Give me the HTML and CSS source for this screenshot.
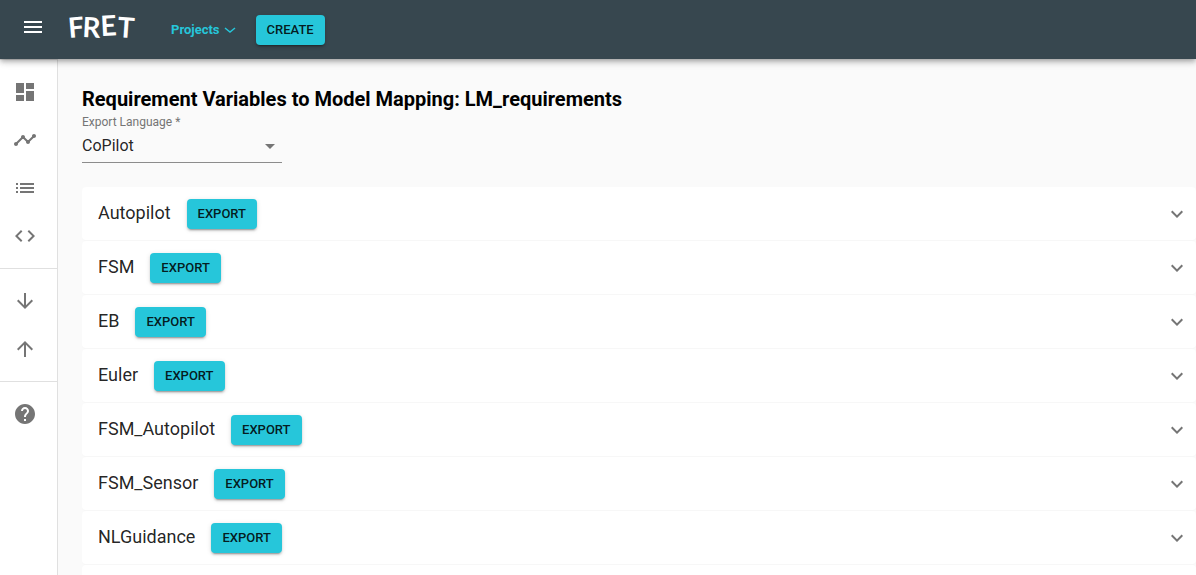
FILE: index.html
```html
<!DOCTYPE html>
<html lang="en">
<head>
<meta charset="utf-8">
<meta name="viewport" content="width=device-width, initial-scale=1">
<title>FRET</title>
<link rel="stylesheet" href="styles.css">
</head>
<body>
<header class="topbar">
  <button class="icon-button menu-button" aria-label="Open menu"><svg class="icon" viewBox="0 0 24 24"><path d="M3 18h18v-2H3v2zm0-5h18v-2H3v2zm0-7v2h18V6H3z"/></svg></button>
  <svg class="logo" viewBox="0 0 72 48" role="img" aria-label="FRET"><text x="2 15 34 50" y="34 33 32 33" rotate="-5 3 -3 4">FRET</text></svg>
  <button class="projects">Projects <svg class="small-chevron" viewBox="0 0 12 12"><path d="M1 4l5 4 5-4"/></svg></button>
  <button class="button">CREATE</button>
</header>
<div class="shell">
  <nav class="sidebar" aria-label="Main">
    <div class="nav-group">
      <button class="icon-button" aria-label="Dashboard"><svg class="icon" viewBox="0 0 24 24"><path d="M3 13h8V3H3v10zm0 8h8v-6H3v6zm10 0h8V11h-8v10zm0-18v6h8V3h-8z"/></svg></button>
      <button class="icon-button" aria-label="Analysis"><svg class="icon" viewBox="0 0 24 24"><path d="M23 8c0 1.1-.9 2-2 2-.18 0-.35-.02-.51-.07l-3.56 3.55c.05.16.07.34.07.52 0 1.1-.9 2-2 2s-2-.9-2-2c0-.18.02-.36.07-.52l-2.55-2.55c-.16.05-.34.07-.52.07s-.36-.02-.52-.07l-4.55 4.56c.05.16.07.33.07.51 0 1.1-.9 2-2 2s-2-.9-2-2 .9-2 2-2c.18 0 .35.02.51.07l4.56-4.55C8.02 9.36 8 9.18 8 9c0-1.1.9-2 2-2s2 .9 2 2c0 .18-.02.36-.07.52l2.55 2.55c.16-.05.34-.07.52-.07s.36.02.52.07l3.55-3.56C19.02 8.35 19 8.18 19 8c0-1.1.9-2 2-2s2 .9 2 2z"/></svg></button>
      <button class="icon-button" aria-label="Requirements"><svg class="icon" viewBox="0 0 24 24"><path d="M3 13h2v-2H3v2zm0 4h2v-2H3v2zm0-8h2V7H3v2zm4 4h14v-2H7v2zm0 4h14v-2H7v2zM7 7v2h14V7H7z"/></svg></button>
      <button class="icon-button" aria-label="Variable mapping"><svg class="icon" viewBox="0 0 24 24"><path d="M9.4 16.6L4.8 12l4.6-4.6L8 6l-6 6 6 6 1.4-1.4zm5.2 0l4.6-4.6-4.6-4.6L16 6l6 6-6 6-1.4-1.4z"/></svg></button>
    </div>
    <div class="nav-group">
      <button class="icon-button" aria-label="Import"><svg class="icon" viewBox="0 0 24 24"><path d="M20 12l-1.41-1.41L13 16.17V4h-2v12.17l-5.58-5.59L4 12l8 8 8-8z"/></svg></button>
      <button class="icon-button" aria-label="Export"><svg class="icon" viewBox="0 0 24 24"><path d="M4 12l1.41 1.41L11 7.83V20h2V7.83l5.58 5.59L20 12l-8-8-8 8z"/></svg></button>
    </div>
    <div class="nav-group">
      <button class="icon-button" aria-label="Help"><svg class="icon" viewBox="0 0 24 24"><path d="M12 2C6.48 2 2 6.48 2 12s4.480 10 10 10 10-4.480 10-10S17.520 2 12 2zm1 17h-2v-2h2v2zm2.070-7.750l-.9.920C13.450 12.900 13 13.500 13 15h-2v-.5c0-1.100.450-2.100 1.170-2.830l1.240-1.260c.370-.360.590-.860.590-1.410 0-1.100-.9-2-2-2s-2 .9-2 2H8c0-2.210 1.790-4 4-4s4 1.790 4 4c0 .880-.360 1.680-.930 2.250z"/></svg></button>
    </div>
  </nav>
  <main class="content">
    <h1 class="title">Requirement Variables to Model Mapping: LM_requirements</h1>
    <div class="field">
      <label class="field-label" for="language">Export Language *</label>
      <div class="select-wrap">
        <select class="select" id="language" required><option>CoPilot</option><option>CoCoSpec</option></select>
        <svg class="icon select-arrow" viewBox="0 0 24 24"><path d="M7 10l5 5 5-5z"/></svg>
      </div>
    </div>
    <div class="components">
      <section class="row"><h2 class="name">Autopilot</h2><button class="button">EXPORT</button><button class="expand" aria-label="Expand Autopilot"><svg class="icon" viewBox="0 0 24 24"><path d="M16.590 8.590L12 13.170 7.410 8.590 6 10l6 6 6-6z"/></svg></button></section>
      <section class="row"><h2 class="name">FSM</h2><button class="button">EXPORT</button><button class="expand" aria-label="Expand FSM"><svg class="icon" viewBox="0 0 24 24"><path d="M16.590 8.590L12 13.170 7.410 8.590 6 10l6 6 6-6z"/></svg></button></section>
      <section class="row"><h2 class="name">EB</h2><button class="button">EXPORT</button><button class="expand" aria-label="Expand EB"><svg class="icon" viewBox="0 0 24 24"><path d="M16.590 8.590L12 13.170 7.410 8.590 6 10l6 6 6-6z"/></svg></button></section>
      <section class="row"><h2 class="name">Euler</h2><button class="button">EXPORT</button><button class="expand" aria-label="Expand Euler"><svg class="icon" viewBox="0 0 24 24"><path d="M16.590 8.590L12 13.170 7.410 8.590 6 10l6 6 6-6z"/></svg></button></section>
      <section class="row"><h2 class="name">FSM_Autopilot</h2><button class="button">EXPORT</button><button class="expand" aria-label="Expand FSM_Autopilot"><svg class="icon" viewBox="0 0 24 24"><path d="M16.590 8.590L12 13.170 7.410 8.590 6 10l6 6 6-6z"/></svg></button></section>
      <section class="row"><h2 class="name">FSM_Sensor</h2><button class="button">EXPORT</button><button class="expand" aria-label="Expand FSM_Sensor"><svg class="icon" viewBox="0 0 24 24"><path d="M16.590 8.590L12 13.170 7.410 8.590 6 10l6 6 6-6z"/></svg></button></section>
      <section class="row"><h2 class="name">NLGuidance</h2><button class="button">EXPORT</button><button class="expand" aria-label="Expand NLGuidance"><svg class="icon" viewBox="0 0 24 24"><path d="M16.590 8.590L12 13.170 7.410 8.590 6 10l6 6 6-6z"/></svg></button></section>
      <section class="row row-end"></section>
    </div>
  </main>
</div>
</body>
</html>
```
FILE: styles.css
```css
* { box-sizing: border-box; }

body {
  margin: 0;
  min-height: 100vh;
  display: flex;
  flex-direction: column;
  background: #fafafa;
  color: rgba(0, 0, 0, 0.87);
  font-family: Roboto, "Liberation Sans", sans-serif;
}

button {
  border: 0;
  padding: 0;
  background: none;
  color: inherit;
  font-family: inherit;
  cursor: pointer;
}

.icon {
  display: block;
  width: 24px;
  height: 24px;
  fill: currentColor;
}

.topbar {
  position: relative;
  z-index: 1;
  display: flex;
  align-items: center;
  height: 59px;
  padding: 0 9px;
  background: #37474f;
  color: #fff;
  box-shadow: 0 2px 4px -1px rgba(0, 0, 0, 0.2), 0 4px 5px rgba(0, 0, 0, 0.14), 0 1px 10px rgba(0, 0, 0, 0.12);
}

.icon-button {
  display: grid;
  place-items: center;
  width: 48px;
  height: 48px;
}

.menu-button { padding-bottom: 6px; }

.logo {
  width: 72px;
  height: 48px;
  margin: 0 32px 4px 10px;
  fill: #fff;
  font: 700 28px Lato, sans-serif;
}

.projects {
  display: flex;
  align-items: center;
  gap: 4px;
  margin-right: 20px;
  color: #26c6da;
  font-size: 13px;
  font-weight: 700;
}

.small-chevron {
  width: 12px;
  height: 12px;
  fill: none;
  stroke: currentColor;
  stroke-width: 1.5;
}

.button {
  height: 30px;
  padding: 0 11px;
  border-radius: 4px;
  background: #26c6da;
  color: rgba(0, 0, 0, 0.87);
  font-size: 13px;
  font-weight: 500;
  box-shadow: 0 3px 1px -2px rgba(0, 0, 0, 0.2), 0 2px 2px rgba(0, 0, 0, 0.14), 0 1px 5px rgba(0, 0, 0, 0.12);
}

.shell {
  display: flex;
  flex: 1;
}

.sidebar {
  flex: none;
  width: 58px;
  border-right: 1px solid #e0e0e0;
  background: #fff;
  color: #757575;
}

.nav-group {
  padding: 8px 1px;
  border-top: 1px solid #e0e0e0;
}

.content {
  flex: 1;
  min-width: 0;
  padding: 24px 0 0 24px;
}

.title {
  margin: 0;
  color: #000;
  font-size: 20px;
  font-weight: 700;
  line-height: 32px;
}

.field {
  width: 200px;
  margin-bottom: 24px;
}

.field-label {
  display: block;
  color: #757575;
  font-size: 12px;
  line-height: 14px;
}

.select-wrap {
  display: grid;
  align-items: center;
  border-bottom: 1px solid #8c8c8c;
}

.select {
  grid-area: 1 / 1;
  width: 100%;
  height: 33px;
  padding: 0;
  border: 0;
  appearance: none;
  background: none;
  color: inherit;
  font: 400 16px Roboto, sans-serif;
}

.select-arrow {
  grid-area: 1 / 1;
  justify-self: end;
  color: #757575;
  pointer-events: none;
}

.row {
  display: flex;
  align-items: center;
  height: 54px;
  padding: 0 7px 0 16px;
  border-bottom: 1px solid #f7f7f7;
  border-radius: 4px;
  background: #fff;
}

.row-end {
  height: 10px;
  border-bottom: 0;
  border-radius: 4px 4px 0 0;
}

.name {
  margin: 0 16px 2px 0;
  font-size: 18px;
  font-weight: 400;
  line-height: 24px;
}

.expand {
  margin-left: auto;
  color: #757575;
}
```
